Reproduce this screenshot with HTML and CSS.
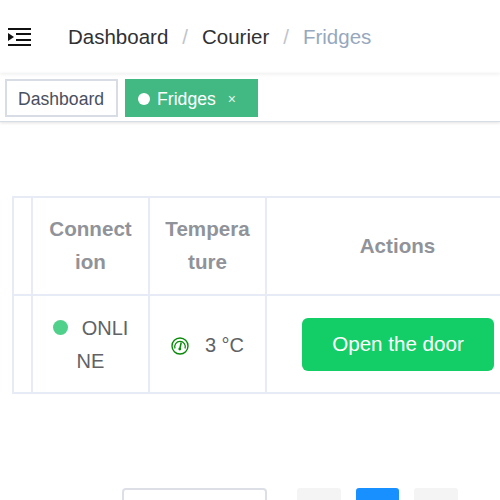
FILE: index.html
```html
<!DOCTYPE html>
<html lang="en">
<head>
  <meta charset="UTF-8" />
  <title>Fridges</title>
  <link rel="stylesheet" href="styles.css">
</head>
<body>
<div class="navbar">
  <svg class="hamburger" width="24" height="20" viewBox="0 0 24 20">
    <path d="M0 1h23v2H0zM8 6h15v2H8zM8 12h15v2H8zM0 17h23v2H0z" fill="#111" />
    <path d="M0 6l6 4-6 4z" fill="#111" />
  </svg>
  <div class="breadcrumb">
    <span>Dashboard</span>
    <span class="sep">/</span>
    <span>Courier</span>
    <span class="sep">/</span>
    <span class="current">Fridges</span>
  </div>
</div>
<div class="tags">
  <div class="tag">Dashboard</div>
  <div class="tag active"><span class="dot"></span>Fridges<span class="close">×</span></div>
</div>
<div class="content">
  <table class="grid">
    <thead>
      <tr>
        <th class="col-blank"></th>
        <th class="col-conn">Connect<br>ion</th>
        <th class="col-temp">Tempera<br>ture</th>
        <th class="col-actions">Actions</th>
      </tr>
    </thead>
    <tbody>
      <tr>
        <td></td>
        <td class="cell-text"><span class="status"></span>ONLI<br>NE</td>
        <td class="cell-text">
          <svg class="gauge" width="18" height="18" viewBox="0 0 18 18" fill="none" stroke="#0a8a0a">
            <circle cx="9" cy="9" r="8" stroke-width="1.4" />
            <path d="M4 11.5a5.3 5.3 0 1 1 10 0" stroke-width="1.2" />
            <path d="M10.2 5.5L9 11" stroke-width="1.5" />
            <circle cx="8.8" cy="12" r="1.4" fill="#0a8a0a" stroke="none" />
          </svg>3 °C
        </td>
        <td class="cell-action"><button class="door">Open the door</button></td>
      </tr>
    </tbody>
  </table>
  <div class="pager">
    <div class="jump"></div>
    <div class="page"></div>
    <div class="page on"></div>
    <div class="page"></div>
  </div>
</div>
</body>
</html>
```

FILE: styles.css
```css
html, body {
  margin: 0;
  height: 500px;
  overflow: hidden;
  background: #fff;
  font-family: "Liberation Sans", Arial, sans-serif;
}
.navbar {
  height: 73px;
  display: flex;
  align-items: center;
  padding-left: 8px;
  box-shadow: 0 1px 4px rgba(0, 21, 41, 0.08);
  position: relative;
}
.hamburger {
  margin-right: 36px;
}
.breadcrumb {
  font-size: 20.5px;
  color: #303133;
  display: flex;
  gap: 14px;
}
.breadcrumb .sep {
  color: #c0c4cc;
}
.breadcrumb .current {
  color: #97a8be;
}
.tags {
  height: 49px;
  box-sizing: border-box;
  padding: 6px 5px 0;
  display: flex;
  gap: 7px;
  border-bottom: 1px solid #d8dce5;
  box-shadow: 0 1px 3px 0 rgba(0, 0, 0, 0.12);
}
.tag {
  height: 38px;
  box-sizing: border-box;
  padding: 2px 12px 0 11px;
  border: 2px solid #d8dce5;
  color: #495060;
  font-size: 17.6px;
  display: flex;
  align-items: center;
}
.tag.active {
  background: #42b983;
  border-color: #42b983;
  color: #fff;
}
.dot {
  width: 12px;
  height: 12px;
  border-radius: 50%;
  background: #fff;
  margin-right: 7px;
}
.close {
  font-size: 14px;
  opacity: 0.85;
  margin: 0 8px 0 12px;
}
.content {
  height: 378px;
  box-sizing: border-box;
  padding: 74px 0 0 12px;
  overflow: hidden;
}
.grid {
  border-collapse: collapse;
  table-layout: fixed;
  width: 518px;
  border: 2px solid #e6ebf5;
  color: #606266;
  font-size: 20px;
}
.grid th, .grid td {
  border: 2px solid #e6ebf5;
  text-align: center;
  padding: 0;
  line-height: 33px;
}
.grid th {
  color: #909399;
  font-size: 20.6px;
  height: 94px;
  padding-bottom: 2px;
}
.grid td {
  height: 94px;
}
.grid td.cell-text {
  padding-top: 2px;
}
.col-blank { width: 17px; }
.col-conn { width: 115px; }
.col-temp { width: 115px; }
.status {
  display: inline-block;
  width: 15px;
  height: 15px;
  border-radius: 50%;
  background: #4fd18b;
  margin-right: 14px;
}
.gauge {
  vertical-align: -3px;
  margin-right: 16px;
}
.grid td.cell-action {
  text-align: left;
  padding-left: 35px;
}
.door {
  width: 192px;
  height: 53px;
  border: none;
  border-radius: 6px;
  background: #13ce66;
  color: #fff;
  font: 20.6px "Liberation Sans", Arial, sans-serif;
  display: block;
}
.pager {
  display: flex;
  margin: 94px 0 0 110px;
}
.jump {
  width: 145px;
  height: 40px;
  box-sizing: border-box;
  border: 2px solid #dcdfe6;
  border-radius: 4px;
  margin-right: 30px;
}
.page {
  width: 43.5px;
  height: 40px;
  border-radius: 3px;
  background: #f4f4f5;
  margin-right: 15px;
}
.page.on {
  background: #1890ff;
}
```
